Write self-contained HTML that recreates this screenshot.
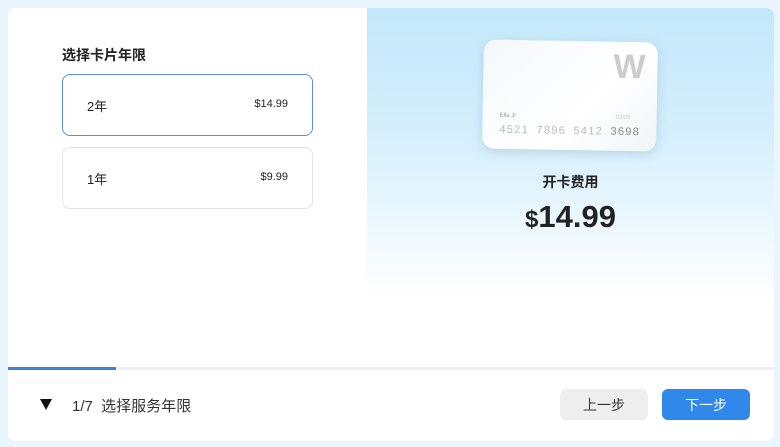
<!DOCTYPE html><html><head><meta charset="utf-8"><style>
*{margin:0;padding:0;box-sizing:border-box}
body{width:780px;height:447px;background:#eaf6fd;font-family:"Liberation Sans","Noto Sans CJK SC",sans-serif;position:relative;overflow:hidden;color:#222}
.wrap{position:absolute;left:8px;top:8px;width:766px;height:433px;background:#fff;border-radius:8px;overflow:hidden}
.right{position:absolute;left:359px;top:0;width:407px;height:290px;background:linear-gradient(#c3e8fb 0%,#d6effc 45%,#fff 100%)}
.title{position:absolute;left:54px;top:37px;font-size:14px;font-weight:bold}
.opt{position:absolute;left:54px;width:251px;height:62px;border:1px solid #e4e4e4;border-radius:8px;font-size:13px}
.opt span{position:absolute;top:21px}
.opt span.p{font-size:11px;top:23px;right:24px}
.card{position:absolute;left:483px;top:41px;width:174px;height:109px;border-radius:12px;background:linear-gradient(135deg,#f4f8fb,#fff 60%,#f0f4f7);box-shadow:0 3px 10px rgba(120,160,190,.35);transform:rotate(1deg)}
.btn{position:absolute;top:389px;width:88px;height:31px;border-radius:6px;font-size:14px;text-align:center;line-height:33px}
</style></head><body>
<div class="wrap">
<div class="right"></div>
<div class="title">选择卡片年限</div>
<div class="opt" style="top:66px;border-color:#5b8fe6"><span style="left:24px">2年</span><span class="p">$14.99</span></div>
<div class="opt" style="top:139px"><span style="left:24px">1年</span><span class="p">$9.99</span></div>
<div style="position:absolute;left:0;top:359px;width:766px;height:3px;background:#f0f0f0"></div>
<div style="position:absolute;left:0;top:359px;width:108px;height:3px;background:#3b82e8"></div>
</div>
<div class="card">
<div style="position:absolute;right:12px;top:6px;font-size:34px;font-weight:bold;color:#ccc">W</div>
<div style="position:absolute;left:17px;top:73px;font-size:6px;color:#999">Ella Ji</div>
<div style="position:absolute;right:26px;top:73px;font-size:6px;color:#ccc">03/25</div>
<div style="position:absolute;left:17px;top:84px;font-size:11px;color:#bbb;letter-spacing:1.3px;word-spacing:3px">4521 7896 5412 <span style="color:#888">3698</span></div>
</div>
<div style="position:absolute;left:367px;width:407px;top:172px;text-align:center;font-size:14px;font-weight:bold">开卡费用</div>
<div style="position:absolute;left:367px;width:407px;top:199px;text-align:center;font-size:31px;font-weight:bold"><span style="font-size:24px">$</span>14.99</div>
<div style="position:absolute;left:40px;top:399px;width:0;height:0;border-left:6px solid transparent;border-right:6px solid transparent;border-top:11px solid #111"></div>
<div style="position:absolute;left:72px;top:395px;font-size:15px;color:#333">1/7&nbsp; 选择服务年限</div>
<div class="btn" style="left:560px;background:#eee;color:#333">上一步</div>
<div class="btn" style="left:662px;background:#2f88ea;color:#fff">下一步</div>
</body></html>
